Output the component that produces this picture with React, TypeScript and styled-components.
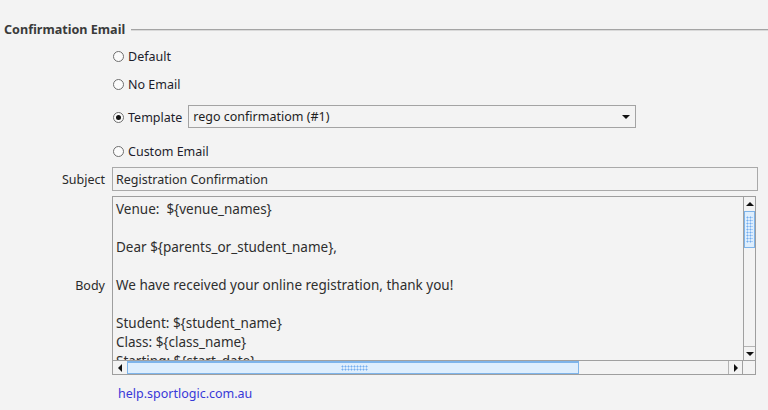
import styled, {createGlobalStyle} from 'styled-components'

const GlobalStyle = createGlobalStyle`
  html, body {
    margin: 0;
    padding: 0;
    background: #f3f3f3;
  }
  body {
    font-family: 'Noto Sans', 'Open Sans', sans-serif;
    font-size: 12.5px;
    color: #1e1e2a;
  }
`

const BODY_LINES = [
  'Venue:  ${venue_names}',
  '',
  'Dear ${parents_or_student_name},',
  '',
  'We have received your online registration, thank you!',
  '',
  'Student: ${student_name}',
  'Class: ${class_name}',
  'Starting: ${start_date}',
  '',
]

function App() {
  return (
    <>
      <GlobalStyle />
      <Page>
        <Legend>
          <h2>Confirmation Email</h2>
          <Rule />
        </Legend>

        <Row $h={28} $mt={2}>
          <span />
          <Radio label="Default" />
        </Row>
        <Row $h={28}>
          <span />
          <Radio label="No Email" />
        </Row>
        <Row $h={24} $mt={7}>
          <span />
          <Inline>
            <Radio label="Template" checked />
            <Select>
              <span>rego confirmatiom (#1)</span>
              <Caret />
            </Select>
          </Inline>
        </Row>
        <Row $h={28} $mt={8}>
          <span />
          <Radio label="Custom Email" />
        </Row>
        <Row $h={24} $mt={2}>
          <Label>Subject</Label>
          <TextInput>Registration Confirmation</TextInput>
        </Row>
        <Row $h={179} $mt={5}>
          <Label>Body</Label>
          <TextArea>
            <AreaMain>
              <AreaText>
                {BODY_LINES.map((l, i) => (
                  <p key={i}>{l || '\u00a0'}</p>
                ))}
              </AreaText>
              <VScroll>
                <ScrollBtn $dir="up" />
                <VThumb />
                <Track />
                <ScrollBtn $dir="down" />
              </VScroll>
            </AreaMain>
            <HScroll>
              <ScrollBtn $dir="left" />
              <HThumb />
              <Track />
              <ScrollBtn $dir="right" />
              <Corner />
            </HScroll>
          </TextArea>
        </Row>
        <Row $h={20} $mt={8}>
          <span />
          <HelpLink href="#">help.sportlogic.com.au</HelpLink>
        </Row>
      </Page>
    </>
  )
}

function Radio({label, checked}: {label: string; checked?: boolean}) {
  return (
    <RadioWrap>
      <RadioDot $checked={!!checked} />
      <span>{label}</span>
    </RadioWrap>
  )
}

const Page = styled.div`
  padding-top: 19px;
  width: 768px;
  height: 410px;
  box-sizing: border-box;
  overflow: hidden;
`

const Legend = styled.div`
  display: flex;
  align-items: center;
  height: 21px;
  padding-left: 4px;

  h2 {
    margin: 0;
    font-size: 12.6px;
    font-weight: 700;
    color: #3a3a3a;
    white-space: nowrap;
  }
`

const Rule = styled.div`
  flex: 1;
  margin-left: 6px;
  height: 0;
  border-top: 1px solid #a4a4a4;
  border-bottom: 1px solid #d9d9d9;
`

const Row = styled.div<{$h: number; $mt?: number}>`
  display: grid;
  grid-template-columns: 105px 1fr;
  column-gap: 7px;
  align-items: center;
  height: ${({$h}) => $h}px;
  margin-top: ${({$mt}) => $mt || 0}px;
  padding-right: 10px;
`

const Label = styled.div`
  text-align: right;
  color: #2a2a2a;
`

const Inline = styled.div`
  display: flex;
  align-items: center;
  height: 100%;
`

const RadioWrap = styled.label`
  display: inline-flex;
  align-items: center;
  gap: 4px;
  padding-left: 1px;
  color: #1d1d2b;
`

const RadioDot = styled.span<{$checked: boolean}>`
  width: 9px;
  height: 9px;
  border-radius: 50%;
  border: 1px solid #6e6e6e;
  background: #fbfbfb;
  position: relative;

  &::after {
    content: '';
    display: ${({$checked}) => ($checked ? 'block' : 'none')};
    position: absolute;
    left: 2px;
    top: 2px;
    width: 5px;
    height: 5px;
    border-radius: 50%;
    background: #111;
  }
`

const Select = styled.div`
  margin-left: 6px;
  width: 448px;
  height: 23px;
  box-sizing: border-box;
  border: 1px solid #a3a3a3;
  display: flex;
  align-items: center;
  justify-content: space-between;
  padding: 0 4px 0 4px;
  color: #1e1e1e;
  align-self: flex-start;
`

const Caret = styled.span`
  width: 0;
  height: 0;
  border-left: 4px solid transparent;
  border-right: 4px solid transparent;
  border-top: 4px solid #111;
  margin-right: 1px;
`

const TextInput = styled.div`
  height: 24px;
  width: 646px;
  box-sizing: border-box;
  border: 1px solid #a9a9a9;
  display: flex;
  align-items: center;
  padding-left: 3px;
  color: #2a2a2a;
`

const TextArea = styled.div`
  width: 644px;
  height: 179px;
  box-sizing: border-box;
  border: 1px solid #9e9e9e;
  display: flex;
  flex-direction: column;
  overflow: hidden;
`

const AreaMain = styled.div`
  flex: 1;
  display: flex;
  min-height: 0;
`

const AreaText = styled.div`
  flex: 1;
  overflow: hidden;
  padding: 3px 3px 0;
  color: #2e2e2e;
  font-size: 13.5px;

  p {
    margin: 0;
    line-height: 19px;
    white-space: pre;
  }
`

const VScroll = styled.div`
  width: 11px;
  border-left: 1px solid #a0a0a0;
  display: flex;
  flex-direction: column;
`

const HScroll = styled.div`
  height: 13px;
  border-top: 1px solid #a0a0a0;
  display: flex;
`

const Track = styled.div`
  flex: 1;
`

const arrows = {
  up: 'border-left: 4px solid transparent; border-right: 4px solid transparent; border-bottom: 4px solid #111;',
  down: 'border-left: 4px solid transparent; border-right: 4px solid transparent; border-top: 4px solid #111;',
  left: 'border-top: 4px solid transparent; border-bottom: 4px solid transparent; border-right: 4px solid #111;',
  right: 'border-top: 4px solid transparent; border-bottom: 4px solid transparent; border-left: 4px solid #111;',
}

const ScrollBtn = styled.div<{$dir: 'up' | 'down' | 'left' | 'right'}>`
  flex: none;
  width: ${({$dir}) => ($dir === 'left' || $dir === 'right' ? '14px' : '11px')};
  height: ${({$dir}) => ($dir === 'left' || $dir === 'right' ? '13px' : '14px')};
  box-sizing: border-box;
  display: flex;
  align-items: center;
  justify-content: center;
  ${({$dir}) => ($dir === 'down' ? 'border-top: 1px solid #b4b4b4;' : '')}
  ${({$dir}) => ($dir === 'right' ? 'border-left: 1px solid #b4b4b4;' : '')}

  &::after {
    content: '';
    width: 0;
    height: 0;
    ${({$dir}) => arrows[$dir]}
  }
`

const grip = `
  background-image: radial-gradient(circle, #74aef0 0.9px, transparent 1.1px);
  background-size: 3px 3px;
  background-repeat: repeat;
`

const VThumb = styled.div`
  height: 37px;
  flex: none;
  box-sizing: border-box;
  border: 1px solid #7eb4ea;
  background: #deeefd;
  position: relative;

  &::after {
    content: '';
    position: absolute;
    left: 1px;
    right: 1px;
    top: 4px;
    bottom: 4px;
    ${grip}
  }
`

const HThumb = styled.div`
  width: 452px;
  flex: none;
  box-sizing: border-box;
  border: 1px solid #7eb4ea;
  border-top-width: 2px;
  background: #deeefd;
  position: relative;

  &::after {
    content: '';
    position: absolute;
    left: 213px;
    width: 27px;
    top: 2px;
    bottom: 2px;
    ${grip}
  }
`

const Corner = styled.div`
  width: 12px;
  border-left: 1px solid #a0a0a0;
`

const HelpLink = styled.a`
  color: #3838d8;
  text-decoration: none;
  padding-left: 6px;
`

export default App
